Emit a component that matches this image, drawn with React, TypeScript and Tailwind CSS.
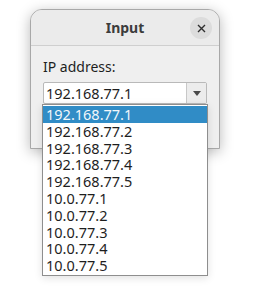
const items = [
  '192.168.77.1',
  '192.168.77.2',
  '192.168.77.3',
  '192.168.77.4',
  '192.168.77.5',
  '10.0.77.1',
  '10.0.77.2',
  '10.0.77.3',
  '10.0.77.4',
  '10.0.77.5',
];

export default function App() {
  return (
    <div
      className="relative w-[266px] h-[288px] overflow-hidden bg-white text-[#1e1e1e]"
      style={{ fontFamily: '"Noto Sans", "DejaVu Sans", sans-serif' }}
    >
      {/* dialog */}
      <div className="ml-[30px] mt-[9px] w-[190px] h-[140px] rounded-t-[12px] border border-[#a8a8a8] bg-[#efefef] shadow-[0_3px_14px_rgba(0,0,0,0.28)]">
        <div className="relative flex h-[36px] items-center justify-center border-b border-[#cfcfcf] rounded-t-[11px] bg-[#ebebeb]">
          <span className="text-[14px] font-bold text-[#3c3c3c] leading-none">Input</span>
          <div className="absolute right-[7px] top-[7px] flex h-[22px] w-[22px] items-center justify-center rounded-full bg-[#dcdcdc]">
            <svg width="9" height="9" viewBox="0 0 9 9">
              <path d="M1 1L8 8M8 1L1 8" stroke="#2e2e2e" strokeWidth="1.4" />
            </svg>
          </div>
        </div>
        <div className="px-[12px] pt-[11px]">
          <div className="text-[14px] leading-[20px]">IP address:</div>
          <div className="mt-[5px] flex h-[22px] rounded-[2px] border border-[#b9b9b9] bg-white">
            <div className="flex-1 pl-[2px] text-[14.5px] leading-[20px]">192.168.77.1</div>
            <div className="flex w-[20px] items-center justify-center border-l border-[#c8c8c8] bg-[#ececec]">
              <svg width="8" height="5" viewBox="0 0 8 5">
                <path d="M0 0H8L4 5Z" fill="#4a4a4a" />
              </svg>
            </div>
          </div>
        </div>
      </div>

      {/* popup list */}
      <div className="absolute left-[42px] top-[104px] w-[166px] border border-[#8e8e8e] bg-white py-[1px] shadow-[0_2px_8px_rgba(0,0,0,0.12)]">
        {items.map((ip, i) => (
          <div
            key={ip}
            className={`h-[16.8px] pl-[3px] text-[14.5px] leading-[16.8px] ${
              i === 0 ? 'bg-[#308cc6] text-[#f2f7fb]' : 'text-[#1e1e1e]'
            }`}
          >
            {ip}
          </div>
        ))}
      </div>
    </div>
  );
}
